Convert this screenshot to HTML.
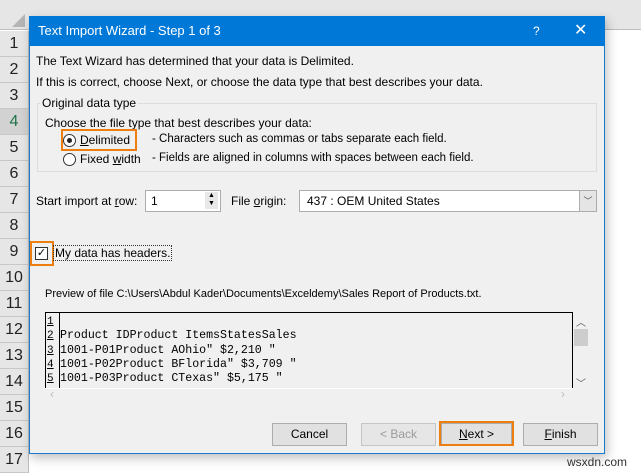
<!DOCTYPE html>
<html><head><style>
*{box-sizing:border-box;margin:0;padding:0}
body{width:641px;height:470px;overflow:hidden;background:#fff;font-family:"Liberation Sans",sans-serif;font-size:12px;color:#000;position:relative}
.a{position:absolute}
.rh{position:absolute;left:0;width:29px;background:#e6e6e6;border-bottom:1px solid #c8c8c8;border-right:1px solid #bdbdbd;font-size:16px;color:#222;text-align:center;display:flex;align-items:center;justify-content:center}
.btn{position:absolute;height:23px;background:#e1e1e1;border:1px solid #adadad;font-size:12px;text-align:center;line-height:21px}
u{text-decoration:underline}
</style></head><body>
<div class="a" style="left:0;top:0;width:641px;height:30px;background:#e6e6e6;border-bottom:1px solid #bdbdbd"></div>
<div class="a" style="left:12px;top:14px;width:0;height:0;border-left:13px solid transparent;border-bottom:13px solid #b5b5b5"></div>
<div class="rh" style="top:31px;height:26px">1</div>
<div class="rh" style="top:57px;height:26px">2</div>
<div class="rh" style="top:83px;height:26px">3</div>
<div class="rh" style="top:109px;height:26px;background:#d2d2d2;color:#217346">4</div>
<div class="rh" style="top:135px;height:26px">5</div>
<div class="rh" style="top:161px;height:26px">6</div>
<div class="rh" style="top:187px;height:26px">7</div>
<div class="rh" style="top:213px;height:26px">8</div>
<div class="rh" style="top:239px;height:26px">9</div>
<div class="rh" style="top:265px;height:26px">10</div>
<div class="rh" style="top:291px;height:26px">11</div>
<div class="rh" style="top:317px;height:26px">12</div>
<div class="rh" style="top:343px;height:26px">13</div>
<div class="rh" style="top:369px;height:26px">14</div>
<div class="rh" style="top:395px;height:26px">15</div>
<div class="rh" style="top:421px;height:26px">16</div>
<div class="rh" style="top:447px;height:26px">17</div>

<div class="a" style="left:29px;top:16px;width:576px;height:438px;background:#f0f0f0;border:1px solid #1979ca;box-shadow:2px 4px 10px rgba(0,0,0,.25)"></div>
<div class="a" style="left:29px;top:16px;width:576px;height:30px;background:#0078d7;color:#fff;font-size:13px;line-height:30px;padding-left:9px">Text Import Wizard - Step 1 of 3</div>
<div class="a" style="left:533px;top:24px;color:#fff;font-size:12px">?</div>
<div class="a" style="left:574px;top:20px;color:#fff;font-size:16px">✕</div>

<div class="a" style="left:36px;top:54px">The Text Wizard has determined that your data is Delimited.</div>
<div class="a" style="left:36px;top:75px">If this is correct, choose Next, or choose the data type that best describes your data.</div>
<div class="a" style="left:37px;top:103px;width:560px;height:69px;border:1px solid #dcdcdc"></div>
<div class="a" style="left:40px;top:96px;background:#f0f0f0;padding:0 2px">Original data type</div>
<div class="a" style="left:45px;top:116px">Choose the file type that best describes your data:</div>
<div class="a" style="left:61px;top:129px;width:76px;height:22px;border:2px solid #ef7e11"></div>
<div class="a" style="left:63px;top:134px;width:13px;height:13px;border:1px solid #333;border-radius:50%;background:#fff"></div>
<div class="a" style="left:67px;top:138px;width:5px;height:5px;border-radius:50%;background:#222"></div>
<div class="a" style="left:80px;top:133px"><u>D</u>elimited</div>
<div class="a" style="left:63px;top:153px;width:13px;height:13px;border:1px solid #333;border-radius:50%;background:#fff"></div>
<div class="a" style="left:80px;top:152px">Fixed <u>w</u>idth</div>
<div class="a" style="left:152px;top:133px;font-size:11.5px">- Characters such as commas or tabs separate each field.</div>
<div class="a" style="left:152px;top:152px;font-size:11.5px">- Fields are aligned in columns with spaces between each field.</div>

<div class="a" style="left:36px;top:194px">Start import at <u>r</u>ow:</div>
<div class="a" style="left:145px;top:190px;width:76px;height:22px;background:#fff;border:1px solid #adadad;padding:3px 5px">1</div>
<div class="a" style="left:205px;top:192px;width:13px;height:17px;background:#e8e8e8;font-size:7px;line-height:8px;text-align:center">▲<br>▼</div>
<div class="a" style="left:231px;top:194px">File <u>o</u>rigin:</div>
<div class="a" style="left:299px;top:190px;width:298px;height:22px;background:#fff;border:1px solid #adadad;padding:3px 7px">437 : OEM United States</div>
<div class="a" style="left:579px;top:191px;width:17px;height:20px;background:#e5e5e5;border-left:1px solid #adadad;font-size:9px;text-align:center;line-height:20px;color:#555">﹀</div>

<div class="a" style="left:30px;top:241px;width:24px;height:25px;border:2px solid #ef7e11"></div>
<div class="a" style="left:35px;top:247px;width:13px;height:13px;border:1px solid #333;background:#fff;font-size:11px;line-height:11px;text-align:center">✓</div>
<div class="a" style="left:53px;top:245px;border:1px dotted #333;padding:0 1px">My data has headers.</div>

<div class="a" style="left:45px;top:288px;font-size:11px">Preview of file C:\Users\Abdul Kader\Documents\Exceldemy\Sales Report of Products.txt.</div>
<div class="a" style="left:45px;top:312px;width:528px;height:77px;border:1px solid #000;border-bottom:none;background:#f0f0f0;overflow:hidden"></div>
<div class="a" style="left:45px;top:312px;width:15px;height:77px;border:1px solid #000;border-top:none;border-bottom:none"></div>
<div class="a" style="font-family:'Liberation Mono',monospace;left:47px;top:315px;line-height:14.3px;font-size:11px"><u>1</u><br><u>2</u><br><u>3</u><br><u>4</u><br><u>5</u></div>
<div class="a" style="font-family:'Liberation Mono',monospace;left:60px;top:315px;line-height:14.3px;font-size:11.6px;white-space:pre">
Product IDProduct ItemsStatesSales
1001-P01Product AOhio" $2,210 "
1001-P02Product BFlorida" $3,709 "
1001-P03Product CTexas" $5,175 "</div>
<div class="a" style="left:45px;top:388px;width:528px;height:1px;background:#fff"></div>
<div class="a" style="left:574px;top:329px;width:14px;height:17px;background:#cdcdcd"></div>
<div class="a" style="left:576px;top:314px;font-size:10px;color:#555">︿</div>
<div class="a" style="left:576px;top:375px;font-size:10px;color:#555">﹀</div>
<div class="a" style="left:50px;top:387px;font-size:12px;color:#bbb">‹</div>
<div class="a" style="left:561px;top:387px;font-size:12px;color:#bbb">›</div>

<div class="btn" style="left:272px;top:423px;width:75px">Cancel</div>
<div class="btn" style="left:361px;top:423px;width:75px;color:#9a9a9a;background:#e6e6e6;border-color:#c5c5c5">&lt; Back</div>
<div class="btn" style="left:441px;top:423px;width:71px"><u>N</u>ext &gt;</div>
<div class="a" style="left:439px;top:421px;width:75px;height:25px;border:2px solid #ef7e11"></div>
<div class="btn" style="left:523px;top:423px;width:75px"><u>F</u>inish</div>
<div class="a" style="left:567px;top:455px;font-size:12px;color:#333">wsxdn.com</div>
</body></html>
